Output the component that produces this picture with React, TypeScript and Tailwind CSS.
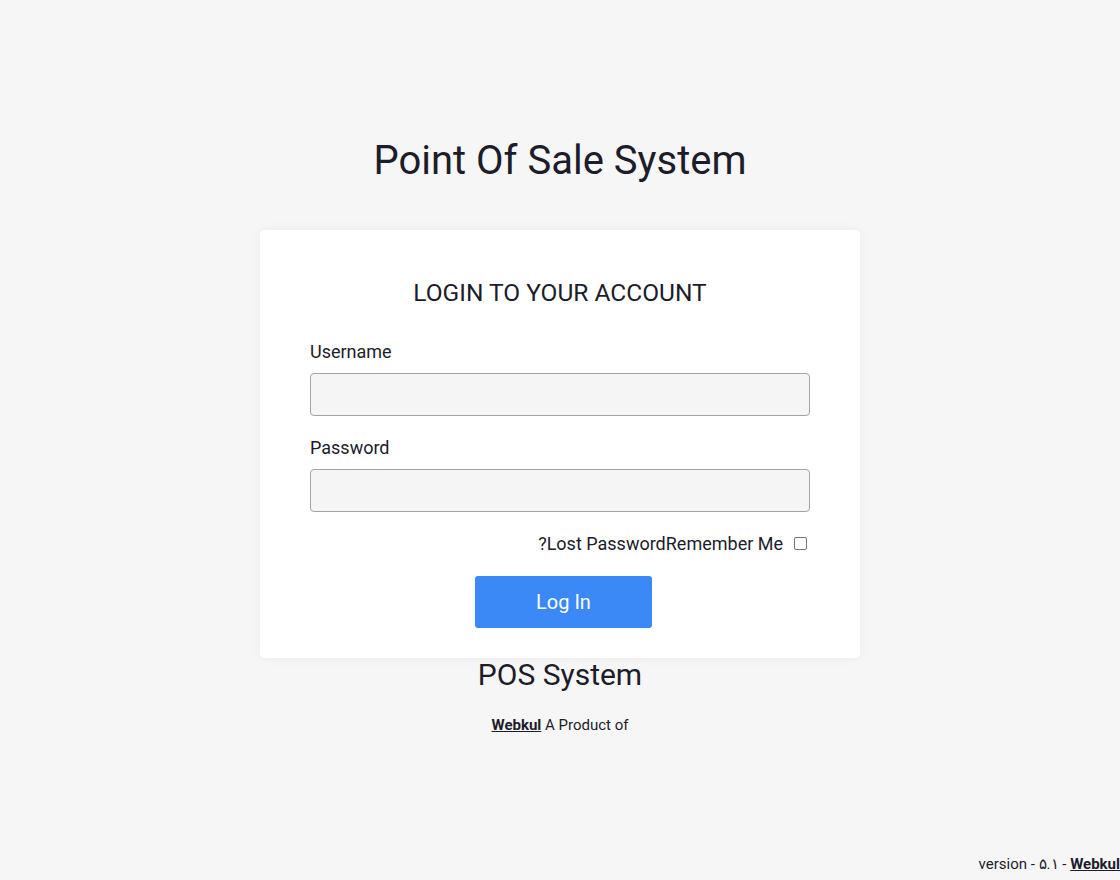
import React from "react";

export default function App() {
  return (
    <div
      className="min-h-screen w-full bg-[#f6f6f6] text-[#1c1c2b] flex flex-col"
      style={{ fontFamily: "Roboto, 'Noto Sans', Arial, sans-serif" }}
    >
      <main className="flex-1 flex flex-col items-center pt-[137px]">
        <h1 className="text-[40px] leading-[48px] font-normal">Point Of Sale System</h1>
        <div className="mt-[45px] w-[600px] bg-white rounded-[5px] shadow-[0_0_12px_rgba(0,0,0,0.05)] px-[50px] pt-[48px] pb-[30px]">
          <h2 className="text-center text-[24.5px] leading-[30px] font-normal">LOGIN TO YOUR ACCOUNT</h2>
          <div className="mt-[30px] flex flex-col">
            <label className="text-[18px] leading-[27px]">Username</label>
            <input
              type="text"
              className="mt-[8px] h-[43px] w-full rounded-[4px] border border-[#a3a3a3] bg-[#f5f5f5] outline-none"
            />
            <label className="mt-[18px] text-[18px] leading-[27px]">Password</label>
            <input
              type="password"
              className="mt-[8px] h-[43px] w-full rounded-[4px] border border-[#a3a3a3] bg-[#f5f5f5] outline-none"
            />
            <div dir="rtl" className="mt-[18px] flex items-center text-[18px] leading-[27px]">
              <span className="ml-[11px] mr-[3px] w-[13px] h-[13px] rounded-[2px] border border-[#767676] bg-white inline-block" />
              <span>Remember Me</span>
              <a className="cursor-pointer">Lost Password?</a>
            </div>
            <div className="mt-[19px] flex justify-center pl-[7px]">
              <button className="w-[177px] h-[52px] rounded-[3px] bg-[#3b89f6] text-white text-[20px]">
                Log In
              </button>
            </div>
          </div>
        </div>
        <div className="-mt-px text-[30px] leading-[36px]">POS System</div>
        <div className="mt-[22px] text-[15px] leading-[20px]">
          <a className="font-bold underline">Webkul</a> A Product of
        </div>
      </main>
      <footer className="flex justify-end text-[15px] leading-[20px] pb-[6px]">
        <span>
          version - ۵.۱ - <a className="font-bold underline">Webkul</a>
        </span>
      </footer>
    </div>
  );
}
